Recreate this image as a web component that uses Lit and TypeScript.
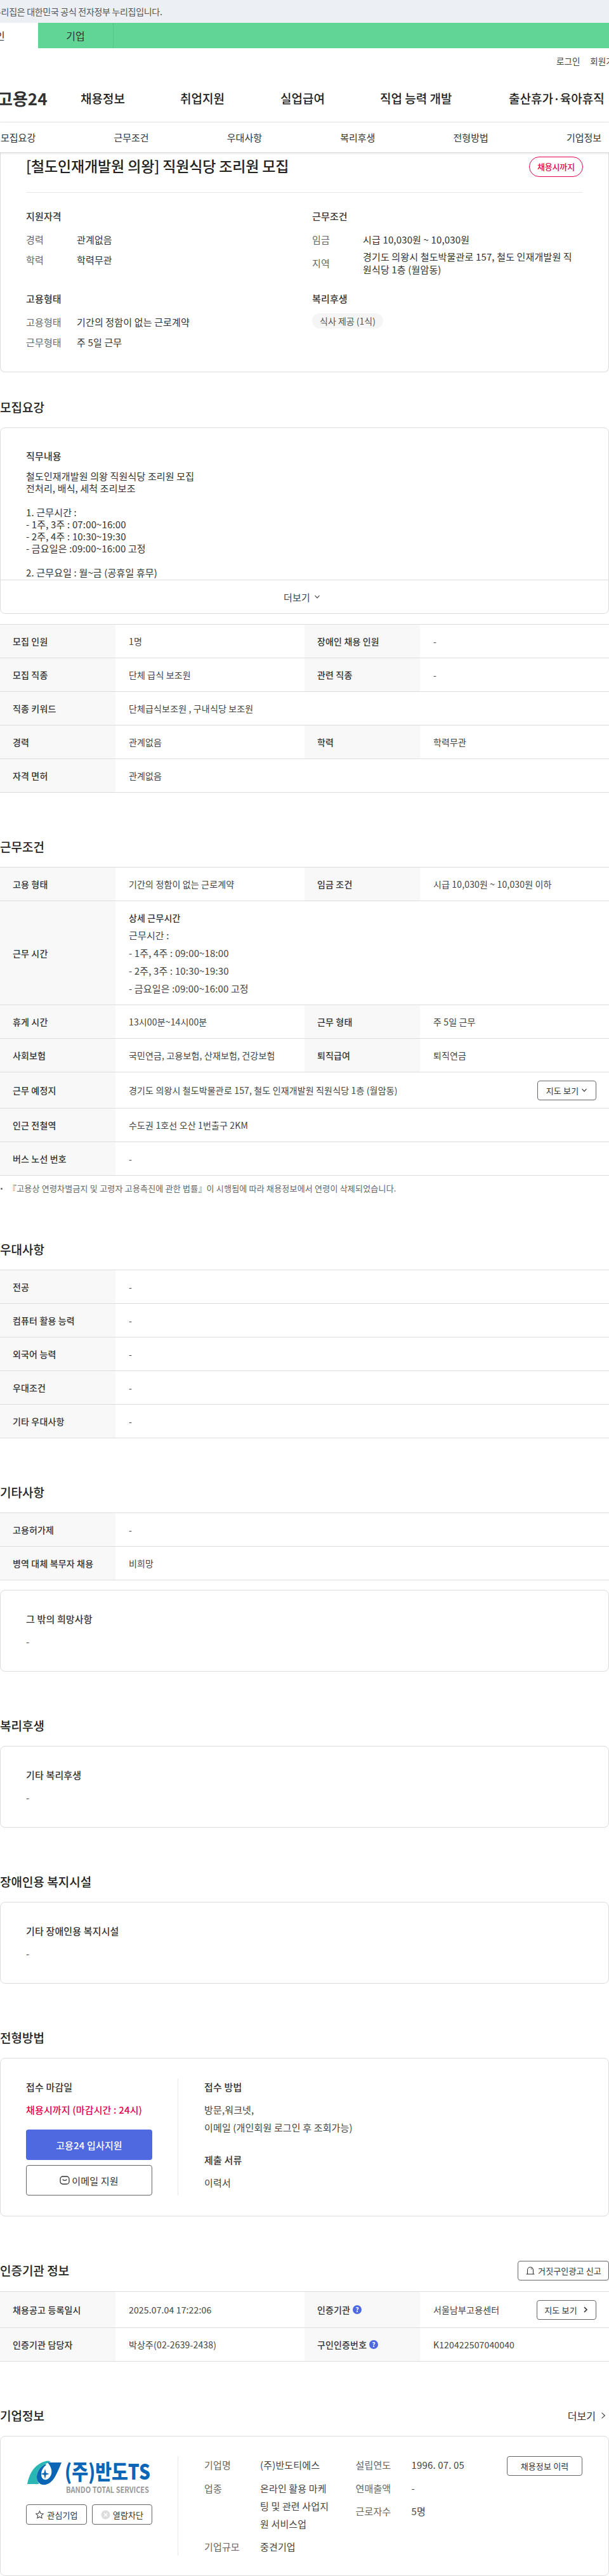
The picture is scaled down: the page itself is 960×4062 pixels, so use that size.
import { LitElement, html, css, svg } from 'lit';
import { customElement } from 'lit/decorators.js';

type Cell = [string | unknown, unknown];

const chevDown = html`<svg class="chev" viewBox="0 0 10 10" width="10" height="10"><path d="M1.500 3.200 5 6.800l3.500-3.600" fill="none" stroke="currentColor" stroke-width="1.200"/></svg>`;
const chevRight = html`<svg class="chev" viewBox="0 0 10 10" width="10" height="10"><path d="M3 1.200 7 5 3 8.800" fill="none" stroke="currentColor" stroke-width="1.600"/></svg>`;
const question = html`<span class="q">?</span>`;

const logo = svg`
  <path fill="#29b6b4" d="M0 37C3 22 10 6 29 1c4-1 7 0 8 1C26 5 16 13 15 24c0 5 1 9 3 12 1 1 0 1-1 1Z"/>
  <path fill="#0b67b5" d="M32 3h22c-3 7-6 15-10 22-5 9-12 14-20 13-6-1-9-6-9-12 0-8 5-16 13-20 1 0 2 0 2 1-5 3-8 9-8 15 0 4 2 7 5 8 5 1 9-3 11-9 1-5 0-11-6-18Z"/>
  <path fill="#0b67b5" d="M28 13l1.600 6.400 5.400 1.600-5.400 1.600L28 29l-1.600-6.400L21 21l5.400-1.600Z"/>
  <text class="logo-main" x="59" y="30" textLength="135" lengthAdjust="spacingAndGlyphs">(주)반도TS</text>
  <text class="logo-sub" x="61" y="51" textLength="131" lengthAdjust="spacingAndGlyphs">BANDO TOTAL SERVICES</text>
`;

@customElement('app-root')
export class AppRoot extends LitElement {
  static styles = css`
    :host {
      display: block;
      overflow: hidden;
      width: 960px;
      background: #fff;
      color: #333;
      font-family: 'Noto Sans CJK KR', 'Noto Sans', sans-serif;
      font-size: 15px;
      letter-spacing: 0.15px;
    }
    .gov {
      height: 36px;
      line-height: 36px;
      background: #eceff4;
      color: #555;
      font-size: 14px;
      letter-spacing: -0.3px;
      margin-left: -11px;
      padding-left: 0;
      white-space: nowrap;
    }
    .kind {
      display: flex;
      height: 40px;
      background: #61d595;
    }
    .kind a {
      display: flex;
      align-items: center;
      justify-content: center;
      box-sizing: border-box;
      font-size: 16px;
    }
    .kind .on {
      width: 134px;
      margin-left: -74px;
      background: #fff;
    }
    .kind .off {
      width: 119px;
      border-right: 1px solid #56c586;
    }
    .util {
      display: flex;
      justify-content: flex-end;
      gap: 16px;
      height: 40px;
      padding-top: 8px;
      box-sizing: border-box;
      margin-right: -20px;
      font-size: 13.500px;
      letter-spacing: 0;
      line-height: 24px;
      color: #444;
    }
    .gnb {
      display: grid;
      grid-template-columns: 127px 157px 158px 157px 203px auto;
      align-items: center;
      height: 77px;
      box-sizing: border-box;
      border-bottom: 1px solid #e6e6e6;
      white-space: nowrap;
      color: #222;
      font-size: 19px;
      font-weight: 500;
      letter-spacing: 0;
    }
    .brand {
      font-size: 26px;
      font-weight: 700;
      margin-left: -4px;
      color: #333;
    }
    .tabs {
      position: relative;
      z-index: 1;
      display: grid;
      grid-template-columns: repeat(6, 178.400px);
      align-items: center;
      height: 48px;
      box-sizing: border-box;
      border-bottom: 1px solid #ddd;
      box-shadow: 0 1px 3px rgba(0, 0, 0, 0.12);
      padding-left: 1px;
      color: #333;
      letter-spacing: 0;
    }
    .card {
      border: 1px solid #ddd;
      border-radius: 8px;
      box-sizing: border-box;
    }
    .summary {
      border-top: none;
      border-radius: 0 0 8px 8px;
      padding: 6px 40px 34.500px;
    }
    .summary-head {
      display: flex;
      justify-content: space-between;
      align-items: flex-start;
      height: 56px;
      border-bottom: 1px solid #e8e8e8;
    }
    h1 {
      margin: 0;
      font-size: 23px;
      line-height: 28px;
      font-weight: 500;
      color: #222;
      letter-spacing: -0.15px;
    }
    .badge {
      width: 85px;
      height: 32px;
      box-sizing: border-box;
      border: 1px solid #e6004d;
      border-radius: 16px;
      color: #e6004d;
      font-size: 13px;
      font-weight: 500;
      line-height: 30px;
      text-align: center;
      letter-spacing: -0.2px;
    }
    .summary-grid {
      display: grid;
      grid-template-columns: 451px 1fr;
      row-gap: 25px;
      padding-top: 25px;
    }
    .sub {
      font-size: 15px;
      font-weight: 500;
      line-height: 24px;
      color: #333;
    }
    dl { margin: 0; }
    .kv {
      display: grid;
      grid-template-columns: 80px 1fr;
      row-gap: 7.500px;
      margin-top: 13px;
      line-height: 24px;
    }
    .kv.tight { row-gap: 5px; }
    .kv dt { color: #666; display: flex; align-items: center; }
    .kv dd { margin: 0; color: #333; }
    .kv .two { line-height: 19.500px; }
    .chip {
      display: inline-block;
      margin-top: 11px;
      height: 24px;
      line-height: 24px;
      padding: 0 12px;
      border-radius: 12px;
      background: #f5f5f5;
      font-size: 14px;
      letter-spacing: 0;
      color: #555;
    }
    section { padding-top: 70px; }
    section.first { padding-top: 40px; }
    .sec-head {
      display: flex;
      justify-content: space-between;
      align-items: center;
      height: 30px;
      margin-bottom: 17px;
    }
    .sec-head.wide-gap { margin-bottom: 18px; }
    h2 {
      margin: 0;
      font-size: 19px;
      line-height: 30px;
      font-weight: 500;
      color: #222;
      letter-spacing: 0;
    }
    .job-body {
      height: 240px;
      padding: 32px 40px 0;
      box-sizing: border-box;
      overflow: hidden;
      border-bottom: 1px solid #ddd;
    }
    .job-text {
      margin-top: 10px;
      line-height: 19px;
      white-space: pre-line;
    }
    .more {
      display: flex;
      align-items: center;
      justify-content: center;
      gap: 6px;
      height: 52px;
      padding-right: 8px;
      color: #444;
    }
    .table { border-top: 1px solid #ddd; }
    .table.gap { margin-top: 16px; }
    .row {
      display: grid;
      grid-template-columns: 182px 298px 182px 1fr;
      min-height: 52px;
      border-bottom: 1px solid #ddd;
    }
    .row.wide { grid-template-columns: 182px 1fr; }
    .row.tall { min-height: 56px; }
    .th, .td {
      display: flex;
      align-items: center;
      font-size: 14px;
    }
    .th {
      padding-left: 20px;
      background: #f8f8f8;
      font-weight: 500;
      color: #333;
      gap: 4px;
    }
    .td {
      padding-left: 21px;
      padding-right: 20px;
      color: #444;
      justify-content: space-between;
    }
    .td.lines {
      display: block;
      padding-top: 11.500px;
      padding-bottom: 11.500px;
      font-size: 15px;
      line-height: 28px;
    }
    .td.lines strong { font-size: 14px; font-weight: 500; color: #333; }
    .td.lines div { white-space: pre-line; }
    .q {
      display: inline-block;
      width: 14px;
      height: 14px;
      border-radius: 50%;
      background: #4f69e0;
      color: #fff;
      font-size: 10px;
      font-weight: 700;
      line-height: 14px;
      text-align: center;
      letter-spacing: 0;
    }
    .btn {
      display: inline-flex;
      align-items: center;
      justify-content: center;
      gap: 4px;
      height: 31px;
      box-sizing: border-box;
      border: 1px solid #666;
      border-radius: 4px;
      background: #fff;
      color: #333;
      font-size: 13px;
      white-space: nowrap;
    }
    .btn.map { width: 93px; }
    .btn.map2 { width: 94px; gap: 8px; }
    .btn.report { width: 144px; }
    .note {
      display: flex;
      align-items: flex-start;
      gap: 9px;
      padding: 11px 0 2px 1px;
      font-size: 13px;
      line-height: 18px;
      letter-spacing: 0.2px;
      color: #666;
    }
    .note::before {
      content: '';
      flex: none;
      width: 3px;
      height: 3px;
      margin-top: 8px;
      border-radius: 50%;
      background: #666;
    }
    .free { padding: 33px 40px 34px; }
    .free-gap { margin-top: 15px; }
    .free .val {
      margin-top: 12px;
      line-height: 24px;
      color: #444;
    }
    .apply {
      display: flex;
      padding: 32px 40px;
    }
    .apply-l {
      width: 199px;
      padding: 1px 40px 0 0;
      border-right: 1px solid #e8e8e8;
    }
    .apply-r { padding: 1px 0 0 41px; }
    .deadline {
      margin-top: 12px;
      line-height: 24px;
      color: #e6004d;
      font-weight: 500;
    }
    .cta {
      display: flex;
      align-items: center;
      justify-content: center;
      gap: 3px;
      height: 48px;
      box-sizing: border-box;
      border-radius: 4px;
      margin-top: 8px;
    }
    .cta.blue {
      margin-top: 19px;
      background: #4f69e0;
      color: #fff;
      font-weight: 500;
    }
    .cta.line { border: 1px solid #666; color: #333; }
    .method {
      margin-top: 10px;
      line-height: 28px;
      white-space: pre-line;
      color: #444;
    }
    .sub.docs-head { margin-top: 25px; }
    .docs { margin-top: 12px; line-height: 24px; color: #444; }
    .company {
      display: flex;
      padding: 31px 40px;
    }
    .company-l {
      width: 199px;
      padding-right: 40px;
      border-right: 1px solid #e8e8e8;
    }
    .logo {
      display: block;
      margin: 7px 0 0 2px;
    }
    .logo-main {
      font-size: 33px;
      font-weight: 900;
      fill: #0b67b5;
      letter-spacing: 0;
    }
    .logo-sub {
      font-size: 13px;
      font-weight: 700;
      fill: #9a9a9a;
      letter-spacing: 0;
    }
    .co-btns {
      display: flex;
      justify-content: space-between;
      margin-top: 16px;
    }
    .co-btns .btn { height: 32px; }
    .co-btns .b1 { width: 96px; }
    .co-btns .b2 { width: 95px; }
    .company-r {
      flex: 1;
      display: flex;
      padding-left: 41px;
    }
    .info {
      display: grid;
      align-content: start;
      row-gap: 8.500px;
      line-height: 28px;
      width: 238.500px;
    }
    .info.a { grid-template-columns: 88px 115px; }
    .info.b { grid-template-columns: 88px auto; }
    .info span:nth-child(odd) { color: #666; }
    .info span:nth-child(even) { color: #444; word-break: break-all; }
    .btn.hist { width: 119px; }
    .link {
      display: inline-flex;
      align-items: center;
      gap: 8px;
      padding-right: 5px;
      font-size: 16px;
      letter-spacing: 0;
      color: #333;
    }
  `;

  row(cells: Cell[], cls = '') {
    return html`<div class="row ${cells.length === 1 ? 'wide' : ''} ${cls}">
      ${cells.map(([k, v]) => html`<div class="th">${k}</div><div class="td">${v}</div>`)}
    </div>`;
  }

  free(title: string, gap = false) {
    return html`<div class="card free ${gap ? 'free-gap' : ''}"><div class="sub">${title}</div><div class="val">-</div></div>`;
  }

  render() {
    return html`
      <div class="gov">누리집은 대한민국 공식 전자정부 누리집입니다.</div>
      <div class="kind"><a class="on">개인</a><a class="off">기업</a></div>
      <div class="util"><a>로그인</a><a>회원가입</a></div>
      <nav class="gnb">
        <a class="brand">고용24</a>
        <a>채용정보</a>
        <a>취업지원</a>
        <a>실업급여</a>
        <a>직업 능력 개발</a>
        <a>출산휴가·육아휴직</a>
      </nav>
      <div class="tabs">
        <a>모집요강</a><a>근무조건</a><a>우대사항</a><a>복리후생</a><a>전형방법</a><a>기업정보</a>
      </div>

      <div class="card summary">
        <div class="summary-head">
          <h1>[철도인재개발원 의왕] 직원식당 조리원 모집</h1>
          <div class="badge">채용시까지</div>
        </div>
        <div class="summary-grid">
          <div>
            <div class="sub">지원자격</div>
            <dl class="kv">
              <dt>경력</dt><dd>관계없음</dd>
              <dt>학력</dt><dd>학력무관</dd>
            </dl>
          </div>
          <div>
            <div class="sub">근무조건</div>
            <dl class="kv tight">
              <dt>임금</dt><dd>시급 10,030원 ~ 10,030원</dd>
              <dt>지역</dt><dd class="two">경기도 의왕시 철도박물관로 157, 철도 인재개발원 직<br />원식당 1층 (월암동)</dd>
            </dl>
          </div>
          <div>
            <div class="sub">고용형태</div>
            <dl class="kv">
              <dt>고용형태</dt><dd>기간의 정함이 없는 근로계약</dd>
              <dt>근무형태</dt><dd>주 5일 근무</dd>
            </dl>
          </div>
          <div>
            <div class="sub">복리후생</div>
            <span class="chip">식사 제공 (1식)</span>
          </div>
        </div>
      </div>

      <section class="first">
        <div class="sec-head"><h2>모집요강</h2></div>
        <div class="card">
          <div class="job-body">
            <div class="sub">직무내용</div>
            <div class="job-text">철도인재개발원 의왕 직원식당 조리원 모집
전처리, 배식, 세척 조리보조

1. 근무시간 :
- 1주, 3주 : 07:00~16:00
- 2주, 4주 : 10:30~19:30
- 금요일은 :09:00~16:00 고정

2. 근무요일 : 월~금 (공휴일 휴무)</div>
          </div>
          <div class="more">더보기 ${chevDown}</div>
        </div>
        <div class="table gap">
          ${this.row([['모집 인원', '1명'], ['장애인 채용 인원', '-']])}
          ${this.row([['모집 직종', '단체 급식 보조원'], ['관련 직종', '-']])}
          ${this.row([['직종 키워드', '단체급식보조원 , 구내식당 보조원']])}
          ${this.row([['경력', '관계없음'], ['학력', '학력무관']])}
          ${this.row([['자격 면허', '관계없음']])}
        </div>
      </section>

      <section>
        <div class="sec-head"><h2>근무조건</h2></div>
        <div class="table">
          ${this.row([['고용 형태', '기간의 정함이 없는 근로계약'], ['임금 조건', '시급 10,030원 ~ 10,030원 이하']])}
          <div class="row wide">
            <div class="th">근무 시간</div>
            <div class="td lines">
              <strong>상세 근무시간</strong>
              <div>근무시간 :
- 1주, 4주 : 09:00~18:00
- 2주, 3주 : 10:30~19:30
- 금요일은 :09:00~16:00 고정</div>
            </div>
          </div>
          ${this.row([['휴게 시간', '13시00분~14시00분'], ['근무 형태', '주 5일 근무']])}
          ${this.row([['사회보험', '국민연금, 고용보험, 산재보험, 건강보험'], ['퇴직급여', '퇴직연금']])}
          ${this.row(
            [['근무 예정지', html`<span>경기도 의왕시 철도박물관로 157, 철도 인재개발원 직원식당 1층 (월암동)</span><span class="btn map">지도 보기 ${chevDown}</span>`]],
            'tall',
          )}
          ${this.row([['인근 전철역', '수도권 1호선 오산 1번출구 2KM']])}
          ${this.row([['버스 노선 번호', '-']])}
        </div>
        <div class="note">『고용상 연령차별금지 및 고령자 고용촉진에 관한 법률』이 시행됨에 따라 채용정보에서 연령이 삭제되었습니다.</div>
      </section>

      <section>
        <div class="sec-head"><h2>우대사항</h2></div>
        <div class="table">
          ${this.row([['전공', '-']])}
          ${this.row([['컴퓨터 활용 능력', '-']])}
          ${this.row([['외국어 능력', '-']])}
          ${this.row([['우대조건', '-']])}
          ${this.row([['기타 우대사항', '-']])}
        </div>
      </section>

      <section>
        <div class="sec-head"><h2>기타사항</h2></div>
        <div class="table">
          ${this.row([['고용허가제', '-']])}
          ${this.row([['병역 대체 복무자 채용', '비희망']])}
        </div>
        ${this.free('그 밖의 희망사항', true)}
      </section>

      <section>
        <div class="sec-head"><h2>복리후생</h2></div>
        ${this.free('기타 복리후생')}
      </section>

      <section>
        <div class="sec-head"><h2>장애인용 복지시설</h2></div>
        ${this.free('기타 장애인용 복지시설')}
      </section>

      <section>
        <div class="sec-head"><h2>전형방법</h2></div>
        <div class="card apply">
          <div class="apply-l">
            <div class="sub">접수 마감일</div>
            <div class="deadline">채용시까지 (마감시간 : 24시)</div>
            <div class="cta blue">고용24 입사지원</div>
            <div class="cta line">
              <svg viewBox="0 0 16 16" width="16" height="16"><rect x="1" y="2" width="14" height="12" rx="4" fill="none" stroke="#333" stroke-width="1.300"/><path d="M4.800 6.500c1 2.400 5.400 2.400 6.400 0" fill="none" stroke="#333" stroke-width="1.300"/></svg>
              이메일 지원
            </div>
          </div>
          <div class="apply-r">
            <div class="sub">접수 방법</div>
            <div class="method">방문,워크넷,
이메일 (개인회원 로그인 후 조회가능)</div>
            <div class="sub docs-head">제출 서류</div>
            <div class="docs">이력서</div>
          </div>
        </div>
      </section>

      <section>
        <div class="sec-head wide-gap">
          <h2>인증기관 정보</h2>
          <span class="btn report">
            <svg viewBox="0 0 16 16" width="16" height="16"><path d="M3.500 14V7.500a4.500 4.500 0 0 1 9 0V14M1.500 14h13" fill="none" stroke="#333" stroke-width="1.100"/><path d="M9 4.800l1 1.700" stroke="#333" stroke-width="1"/></svg>
            거짓구인광고 신고
          </span>
        </div>
        <div class="table">
          ${this.row(
            [
              ['채용공고 등록일시', '2025.07.04 17:22:06'],
              [html`인증기관 ${question}`, html`<span>서울남부고용센터</span><span class="btn map2">지도 보기 ${chevRight}</span>`],
            ],
            'tall',
          )}
          ${this.row([
            ['인증기관 담당자', '박상주(02-2639-2438)'],
            [html`구인인증번호 ${question}`, 'K120422507040040'],
          ])}
        </div>
      </section>

      <section>
        <div class="sec-head">
          <h2>기업정보</h2>
          <span class="link">더보기 <svg viewBox="0 0 10 14" width="8" height="12"><path d="M2 1.500 8 7l-6 5.500" fill="none" stroke="#333" stroke-width="1.300"/></svg></span>
        </div>
        <div class="card company">
          <div class="company-l">
            <svg class="logo" viewBox="0 0 195 53" width="195" height="53">${logo}</svg>
            <div class="co-btns">
              <span class="btn b1">
                <svg viewBox="0 0 16 16" width="15" height="15"><path d="M8 1.800l1.900 4 4.300.5-3.200 3 .9 4.300L8 11.400l-3.900 2.200.9-4.300-3.200-3 4.300-.5Z" fill="none" stroke="#444" stroke-width="1.100"/></svg>
                관심기업
              </span>
              <span class="btn b2">
                <svg viewBox="0 0 16 16" width="15" height="15"><circle cx="8" cy="8" r="7.500" fill="#ddd"/><path d="M5.300 5.300l5.400 5.400M10.700 5.300l-5.400 5.400" stroke="#fff" stroke-width="1.500"/></svg>
                열람차단
              </span>
            </div>
          </div>
          <div class="company-r">
            <div class="info a">
              <span>기업명</span><span>(주)반도티에스</span>
              <span>업종</span><span>온라인 활용 마케팅 및 관련 사업지원 서비스업</span>
              <span>기업규모</span><span>중견기업</span>
            </div>
            <div class="info b">
              <span>설립연도</span><span>1996. 07. 05</span>
              <span>연매출액</span><span>-</span>
              <span>근로자수</span><span>5명</span>
            </div>
            <span class="btn hist">채용정보 이력</span>
          </div>
        </div>
      </section>
    `;
  }
}
